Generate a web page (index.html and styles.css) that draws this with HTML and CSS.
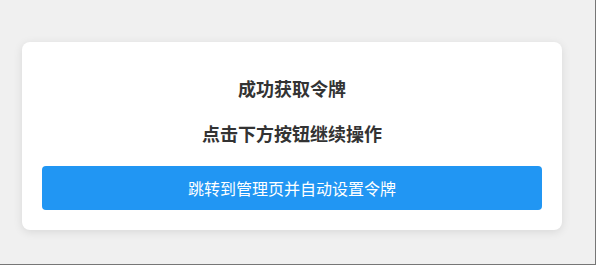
FILE: index.html
```html
<!DOCTYPE html>
<html lang="zh-CN">
<head>
<meta charset="utf-8">
<title>成功获取令牌</title>
<link rel="stylesheet" href="styles.css">
</head>
<body>
<div class="frame">
  <div class="card">
    <p class="title">成功获取令牌</p>
    <p class="subtitle">点击下方按钮继续操作</p>
    <button class="btn" type="button">跳转到管理页并自动设置令牌</button>
  </div>
</div>
</body>
</html>
```

FILE: styles.css
```css
html, body {
  margin: 0;
  padding: 0;
  background: #f0f0f0;
}
body {
  font-family: "Noto Sans CJK SC", "Noto Sans", sans-serif;
  color: #333;
}
.frame {
  box-sizing: border-box;
  width: 596px;
  height: 265px;
  border-right: 1px solid #767676;
  border-bottom: 1px solid #767676;
  padding: 42px 0 0 22px;
}
.card {
  box-sizing: border-box;
  width: 540px;
  background: #fff;
  border-radius: 8px;
  box-shadow: 0 2px 10px rgba(0, 0, 0, 0.1);
  padding: 33px 20px 20px;
  display: flex;
  flex-direction: column;
  align-items: stretch;
}
.title, .subtitle {
  margin: 0;
  font-size: 18px;
  line-height: 26px;
  font-weight: bold;
  text-align: center;
  color: #333;
}
.title { margin-bottom: 19px; }
.subtitle { margin-bottom: 20px; }
.btn {
  height: 44px;
  border: 0;
  border-radius: 4px;
  background: #2196f3;
  color: #fff;
  font-family: "Noto Sans CJK SC", "Noto Sans", sans-serif;
  font-size: 16px;
  padding: 0;
  cursor: pointer;
}
```
